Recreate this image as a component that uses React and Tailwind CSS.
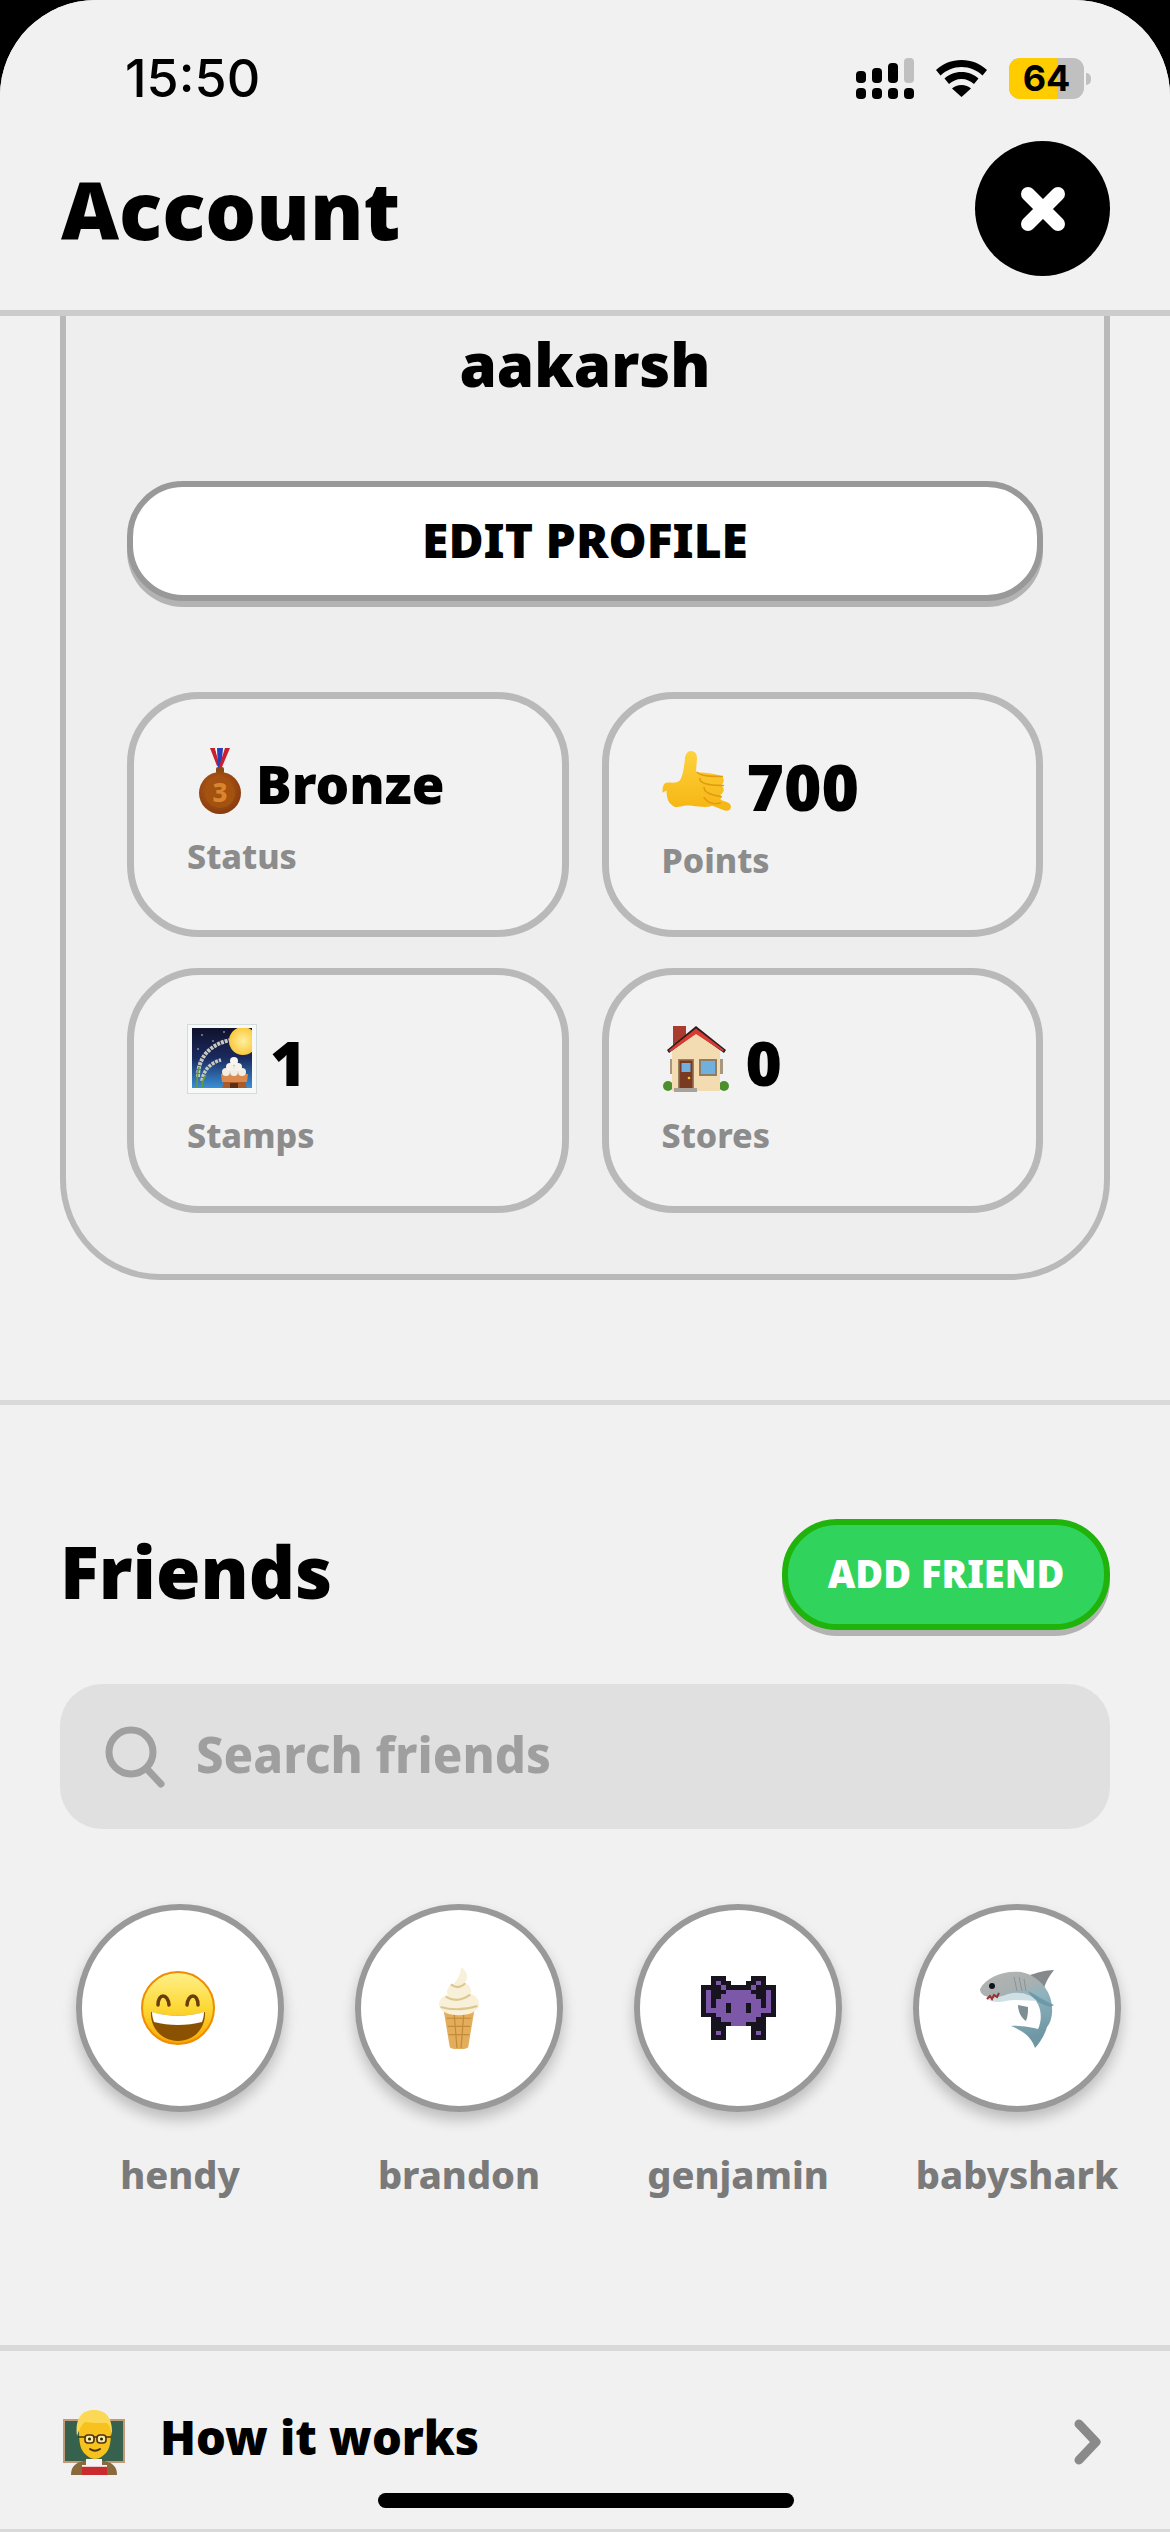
const F = { fontFamily: '"Noto Sans", "Open Sans", sans-serif' };

function Signal() {
  return (
    <svg width="58" height="41" viewBox="0 0 58 41" className="block">
      <rect x="0" y="13" width="10" height="12" rx="4" fill="#000" />
      <rect x="16" y="10" width="10" height="15" rx="4" fill="#000" />
      <rect x="32" y="5" width="10" height="20" rx="4" fill="#000" />
      <rect x="48" y="0" width="10" height="25" rx="4" fill="#c0c0c0" />
      {[0, 16, 32, 48].map((x) => (
        <rect key={x} x={x} y="30" width="10" height="11" rx="4" fill="#000" />
      ))}
    </svg>
  );
}

function Wifi() {
  return (
    <svg width="51" height="37" viewBox="0 0 51 37" className="block">
      <path d="M25.5 0C15.5 0 7 3.500 0 10l4.500 5.500C10.500 10 17.500 7 25.500 7s15 3 21 8.500L51 10C44 3.500 35.500 0 25.500 0Z" fill="#000" />
      <path d="M25.500 12c-7 0-12.500 2.500-17 6.500l4.500 5.500c3.500-3 7.500-5 12.500-5s9 2 12.500 5l4.500-5.500C38 14.500 32.500 12 25.500 12Z" fill="#000" />
      <path d="M25.500 25c-4 0-7 1.500-9.500 3.500L25.500 37 35 28.500C32.500 26.500 29.500 25 25.500 25Z" fill="#000" />
    </svg>
  );
}

function Battery() {
  return (
    <div className="flex items-center">
      <div className="relative w-[75px] h-[41px] rounded-[11px] bg-[#c0c0c0]">
        <div className="h-full w-[48px] rounded-l-[11px] bg-[#ffcc00]" />
        <div
          className="absolute inset-0 flex items-center justify-center text-[36px] leading-[41px] font-bold text-black"
          style={{ fontFamily: '"Inter", sans-serif' }}
        >
          64
        </div>
      </div>
      <div className="ml-[2px] w-[5px] h-[12px] rounded-r-full bg-[#c0c0c0]" />
    </div>
  );
}

function Medal({ className }) {
  return (
    <svg viewBox="0 0 42 66" className={className}>
      <defs>
        <radialGradient id="bz" cx="45%" cy="40%" r="65%">
          <stop offset="0" stopColor="#c0651c" />
          <stop offset="1" stopColor="#82370b" />
        </radialGradient>
      </defs>
      <path d="M11 0h5l5 18h-3Z" fill="#c8202c" />
      <path d="M16 0h3l3 16h-2Z" fill="#fff" />
      <path d="M18 0h6l-2 22h-3Z" fill="#2a3fb8" />
      <path d="M26 0h5l-8 19h-3Z" fill="#c8202c" />
      <rect x="17" y="19" width="8" height="7" rx="2" fill="#8a4a12" />
      <circle cx="21" cy="45" r="21" fill="url(#bz)" />
      <circle cx="21" cy="45" r="15" fill="#a4520f" />
      <text x="21" y="54" textAnchor="middle" fontSize="26" fontWeight="800" fill="#d9852f" style={F}>3</text>
    </svg>
  );
}

function CallMe({ className }) {
  return (
    <svg viewBox="13 10 68 67" className={className}>
      <defs>
        <linearGradient id="hd" x1="0" y1="0" x2="0" y2="1">
          <stop offset="0" stopColor="#fdd23e" />
          <stop offset="1" stopColor="#f6b512" />
        </linearGradient>
      </defs>
      <path
        d="M13 52C13 46 14 42 18 42c4 0 9 1 12-2 3-4 4-12 5-20 0-6 3-9 6-9 4 0 6 3 6 7l-1 14c8 0 16 1 23 3 4 1 5 4 4 7-1 2-2 2-2 3 2 1 3 4 2 6-1 2-2 3-3 3 1 2 1 3 0 5l8 3c3 2 3 5 1 7-2 1-4 1-6 0l-11-4c-5 2-12 1-20 0-5-1-9 0-13 1-3 1-5 0-7-2-4-3-5-8-5-14Z"
        fill="url(#hd)"
      />
      <path d="M47 32c4 4 14 4 25 4M50 38c-1 4 6 7 23 7M54 47c0 5 6 7 17 9M54 57c4 5 10 7 16 5" fill="none" stroke="#e39a10" strokeWidth="1.500" strokeLinecap="round" />
    </svg>
  );
}

function Stamp({ className }) {
  return (
    <svg viewBox="7 5 70 70" className={className}>
      <defs>
        <linearGradient id="sky" x1="0" y1="0" x2="0" y2="1">
          <stop offset="0" stopColor="#10122c" />
          <stop offset="0.5" stopColor="#1a2a5e" />
          <stop offset="1" stopColor="#3a8fd6" />
        </linearGradient>
        <radialGradient id="mn" cx="50%" cy="50%" r="50%">
          <stop offset="0" stopColor="#fff0a0" />
          <stop offset="1" stopColor="#fbc93c" />
        </radialGradient>
        <clipPath id="stc">
          <rect x="12" y="9" width="60" height="60" />
        </clipPath>
      </defs>
      <rect x="7.500" y="5.500" width="69" height="69" fill="#f7f9f9" stroke="#d3dcdc" strokeWidth="1" />
      <g clipPath="url(#stc)">
        <rect x="12" y="9" width="60" height="60" fill="url(#sky)" />
        <circle cx="63" cy="22" r="14" fill="url(#mn)" />
        <circle cx="22" cy="16" r="0.700" fill="#fff" />
        <circle cx="33" cy="22" r="0.700" fill="#fff" />
        <circle cx="44" cy="13" r="0.700" fill="#fff" />
        <circle cx="18" cy="30" r="0.700" fill="#fff" />
        <path d="M18 58C18 40 28 26 50 21" fill="none" stroke="#c8c8c0" strokeWidth="4" strokeDasharray="3 1" />
        <path d="M22 62C23 52 30 44 41 41" fill="none" stroke="#c8c8c0" strokeWidth="3.500" strokeDasharray="3 1" />
        <path d="M17 69C17 60 17 54 19 48M22 69C22 64 23 60 26 56" fill="none" stroke="#5f9a3f" strokeWidth="1.800" />
        <path d="M41 55h27l-1 8H42Z" fill="#d98a4c" />
        <path d="M44 63h21l2 6H42Z" fill="#a85a2a" />
        <rect x="50" y="64" width="8" height="5" fill="#5a2e14" />
        <circle cx="46" cy="53" r="4" fill="#f2ede2" />
        <circle cx="54" cy="53" r="4" fill="#f2ede2" />
        <circle cx="62" cy="53" r="4" fill="#f2ede2" />
        <circle cx="50" cy="48" r="4" fill="#f7f3ea" />
        <circle cx="58" cy="48" r="4" fill="#f7f3ea" />
        <circle cx="54" cy="42" r="4" fill="#faf7f0" />
      </g>
    </svg>
  );
}

function House({ className }) {
  return (
    <svg viewBox="8 6 66 68" className={className}>
      <rect x="18" y="7" width="13" height="20" fill="#a93b2f" />
      <circle cx="13" cy="67" r="5" fill="#4d8f2c" />
      <circle cx="69" cy="67" r="5" fill="#4d8f2c" />
      <rect x="15" y="40" width="3" height="15" fill="#a8977e" />
      <rect x="65" y="40" width="3" height="15" fill="#a8977e" />
      <path d="M17 30 41 12l24 18v42H17Z" fill="#f3dcb2" />
      <path d="M12 31 41 7l30 24-2 3L41 14 14 34Z" fill="#2a1d1d" />
      <path d="M14 31 41 9.500l28 21.500-1 1.500L41 15 15 33Z" fill="#d93b34" />
      <rect x="23" y="40" width="16" height="29" fill="#9a8062" />
      <rect x="24.500" y="41.500" width="13" height="27.500" fill="#7a3a22" />
      <rect x="26.500" y="44" width="9" height="9" fill="#6fb0df" />
      <circle cx="34" cy="59" r="1.300" fill="#f4c63a" />
      <rect x="44" y="40" width="18" height="17" fill="#947c5e" />
      <rect x="46" y="42" width="14" height="13" fill="#6fb0df" />
      <rect x="19" y="69" width="23" height="4" fill="#a8a29a" />
    </svg>
  );
}

function Grin({ className }) {
  return (
    <svg viewBox="0 0 74 74" className={className}>
      <defs>
        <linearGradient id="gf" x1="0" y1="0" x2="0" y2="1">
          <stop offset="0" stopColor="#fff08a" />
          <stop offset="0.5" stopColor="#fdd835" />
          <stop offset="1" stopColor="#f9a602" />
        </linearGradient>
      </defs>
      <circle cx="37" cy="37" r="36" fill="url(#gf)" stroke="#ef8c00" strokeWidth="2" />
      <path d="M17 34c0-12 10-12 11 0M46 34c1-12 11-12 11 0" fill="none" stroke="#6b3d0a" strokeWidth="3.500" strokeLinecap="round" />
      <path d="M10 41c16 5 38 5 54 0 1 16-11 29-27 29S9 57 10 41Z" fill="#8a5200" />
      <path d="M11 41c16 5 36 5 52 0 0 4-1 7-2 10-15 4-33 4-48 0-1-3-2-6-2-10Z" fill="#fff" />
    </svg>
  );
}

function IceCream({ className }) {
  return (
    <svg viewBox="5 0 40 80" className={className}>
      <path d="M10 42h30l-6 36c-1 3-17 3-18 0Z" fill="#e3ad5c" />
      <path d="M13 50h24M14 58h22M15 66h20M20 42l3 37M30 42l-3 37" stroke="#c48b3a" strokeWidth="1.200" fill="none" />
      <path d="M27 0c7 5 7 11 4 15 5 3 7 8 5 11 6 1 10 8 8 13-3 6-11 8-19 8S9 45 6 39c-2-5 2-11 8-12-2-5 1-9 6-11 4-4 7-10 7-16Z" fill="#f8f0d8" />
      <path d="M12 29c8 5 17 3 24-2M17 17c5 4 10 3 14-1M7 39c10 3 23 3 36-1" fill="none" stroke="#dcc88f" strokeWidth="2" />
    </svg>
  );
}

const INVADER = [
  '..kkk.....kkk..',
  '..kPkk...kkPk..',
  'kkkkPkkkkkPkkkk',
  'kPkkkPPPPPkkkPk',
  'kPkkPPPPPPPkkPk',
  'kPkPPPPPPPPPkPk',
  'kPkPPkPPPkPPkPk',
  'kPPPPkPPPkPPPPk',
  'kkkPPPPPPPPPkkk',
  '..kkPPPPPPPkk..',
  '..kkkkPPPkkkk..',
  '..kkk.....kkk..',
  '..kPk.....kPk..',
  '..kkk.....kkk..',
];

function Invader({ className }) {
  return (
    <svg viewBox="0 0 15 14" shapeRendering="crispEdges" className={className} preserveAspectRatio="none">
      {INVADER.flatMap((row, y) =>
        row.split('').map((c, x) =>
          c === '.' ? null : <rect key={`${x}-${y}`} x={x} y={y} width="1.020" height="1.020" fill={c === 'k' ? '#17131f' : '#7d57a8'} />
        )
      )}
    </svg>
  );
}

function Shark({ className }) {
  return (
    <svg viewBox="12 6 78 82" className={className}>
      <defs>
        <linearGradient id="sh" x1="0" y1="0" x2="0.300" y2="1">
          <stop offset="0" stopColor="#b4b6b4" />
          <stop offset="0.32" stopColor="#a9b0b0" />
          <stop offset="0.5" stopColor="#8fb3bf" />
          <stop offset="1" stopColor="#6f96a3" />
        </linearGradient>
      </defs>
      <path d="M64 14C70 12 80 9 88 9 84 14 80 20 78 27Z" fill="#85898b" />
      <path d="M52 44C52 50 55 57 60 60 62 55 62 50 62 46Z" fill="#7f8e93" />
      <path d="M14 28C20 16 38 9 55 11 68 13 80 24 84 36 88 48 86 60 81 66 79 73 74 82 69 87 66 78 60 71 45 65 55 64 66 67 72 68 76 60 76 48 70 40 60 32 48 33 36 36 26 38 14 36 14 28Z" fill="url(#sh)" />
      <path d="M20 37C28 38 36 35 42 33 54 30 64 33 72 40 64 40 50 38 40 40 32 42 24 41 20 37Z" fill="#cfe0e4" />
      <path d="M62 30C70 34 78 40 88 44L84 46C76 44 66 38 62 30Z" fill="#6c9aa9" />
      <path d="M48 16 51 30M53 16 56 30M58 18 60 30" fill="none" stroke="#8e9292" strokeWidth="1" />
      <circle cx="26" cy="25" r="3" fill="#10151a" />
      <path d="M21 38 24 35 26 38 28 34 31 36 33 32" fill="none" stroke="#9a3030" strokeWidth="2" />
    </svg>
  );
}

function Teacher({ className }) {
  return (
    <svg viewBox="8 4 62 66" className={className}>
      <rect x="8" y="14" width="62" height="44" fill="#c29a7a" />
      <rect x="10" y="16" width="58" height="40" fill="#35614d" />
      <path d="M16 70c0-7 3-11 9-13 9-3 19-3 28 0 6 2 9 6 9 13Z" fill="#8a6a3c" />
      <path d="M31 54h16v6H31Z" fill="#f4f4f4" />
      <rect x="27" y="60" width="25" height="10" fill="#c92b2f" />
      <rect x="27" y="60" width="25" height="1.800" fill="#f2f2f2" />
      <path d="M24 24c0-8 7-12 16-12s16 4 16 12c0 13-1 19-5 24-3 3-7 6-11 6s-8-3-11-6c-4-5-5-11-5-24Z" fill="#f7c21d" />
      <path d="M22 31C20 14 26 5 39 5s19 9 18 26c-1-5-2-10-5-13-8 0-15 0-22-1-4 3-6 8-8 14Z" fill="#fcd857" />
      <rect x="30" y="30" width="9" height="8" rx="3" fill="#fbe9a8" stroke="#4a3410" strokeWidth="1.600" />
      <rect x="42" y="30" width="9" height="8" rx="3" fill="#fbe9a8" stroke="#4a3410" strokeWidth="1.600" />
      <path d="M39 32h3M30 32h-7M51 32h5" stroke="#4a3410" strokeWidth="1.600" />
      <circle cx="34.500" cy="34" r="1.500" fill="#2f2208" />
      <circle cx="46.500" cy="34" r="1.500" fill="#2f2208" />
      <path d="M35 44c3 2 7 2 10 0" fill="none" stroke="#4a3410" strokeWidth="2" strokeLinecap="round" />
    </svg>
  );
}

function Stat({ icon, value, label, gap, top, labelTop, valueClass }) {
  return (
    <div
      className="h-[245px] rounded-[72px] border-[7px] border-[#b9b9b9] bg-[#f2f2f2] pl-[53px]"
      style={{ paddingTop: top }}
    >
      <div className="flex items-center h-[70px]" style={{ gap }}>
        {icon}
        <span className={`${valueClass} leading-none font-black text-black`}>{value}</span>
      </div>
      <div className="text-[34px] leading-[40px] font-extrabold text-[#8c8c8c]" style={{ marginTop: labelTop }}>
        {label}
      </div>
    </div>
  );
}

function Friend({ name, icon }) {
  return (
    <div className="w-[208px] flex flex-col items-center shrink-0">
      <div className="w-[208px] h-[208px] rounded-full border-[6px] border-[#999999] bg-white flex items-center justify-center shadow-[0_8px_14px_rgba(0,0,0,0.22)]">
        {icon}
      </div>
      <div className="mt-[38px] text-[38px] leading-[48px] font-extrabold text-[#7a7a7a] whitespace-nowrap">{name}</div>
    </div>
  );
}

export default function App() {
  return (
    <div className="w-[1170px] h-[2532px] bg-black overflow-hidden relative" style={F}>
      <div className="h-full bg-[#f1f1f1] rounded-t-[96px] overflow-hidden flex flex-col">
        <header className="h-[316px] shrink-0 border-b-[6px] border-[#cccccc] relative z-10 bg-[#f1f1f1]">
          <div className="flex items-center justify-between h-[141px] pl-[125px] pr-[79px] pt-[66px] pb-[50px]">
            <span className="text-[52px] leading-none font-medium text-black" style={{ fontFamily: '"Inter", sans-serif' }}>
              15:50
            </span>
            <div className="flex items-center gap-[22px]">
              <Signal />
              <Wifi />
              <Battery />
            </div>
          </div>
          <div className="flex items-center justify-between pl-[61px] pr-[60px]">
            <h1 className="text-[80px] leading-[135px] font-black text-black">Account</h1>
            <button className="w-[135px] h-[135px] rounded-full bg-black flex items-center justify-center">
              <svg width="44" height="44" viewBox="0 0 44 44">
                <path d="M7 7 37 37M37 7 7 37" stroke="#fff" strokeWidth="14" strokeLinecap="round" />
              </svg>
            </button>
          </div>
        </header>

        <section className="mx-[60px] border-x-[6px] border-b-[6px] border-[#b9b9b9] bg-[#eeeeee] rounded-b-[100px] px-[61px] pb-[61px] h-[964px] shrink-0">
          <div className="h-[165px] pt-[13px] text-center text-[60px] leading-[70px] font-black text-black">aakarsh</div>
          <button className="w-full h-[120px] rounded-[56px] border-[6px] border-[#999999] bg-white shadow-[0_6px_0_#b3b3b3] pb-[3px] text-[48px] leading-none font-black text-black">
            EDIT PROFILE
          </button>
          <div className="grid grid-cols-2 gap-x-[33px] gap-y-[31px] mt-[91px]">
            <Stat top={47} gap={15} labelTop={20} icon={<Medal className="w-[42px] h-[66px] ml-[12px]" />} value="Bronze" valueClass="text-[53px] mt-[4px]" label="Status" />
            <Stat top={50} gap={15} labelTop={21} icon={<CallMe className="w-[70px] h-[68px]" />} value="700" valueClass="text-[64px] mt-[6px]" label="Points" />
            <Stat top={49} gap={13} labelTop={21} icon={<Stamp className="w-[70px] h-[70px]" />} value="1" valueClass="text-[62px] mt-[6px]" label="Stamps" />
            <Stat top={49} gap={16} labelTop={21} icon={<House className="w-[68px] h-[68px]" />} value="0" valueClass="text-[62px] mt-[6px]" label="Stores" />
          </div>
        </section>

        <div className="h-[5px] bg-[#d9d9d9] mt-[120px] shrink-0" />

        <section className="px-[60px] shrink-0">
          <div className="flex items-center justify-between mt-[114px]">
            <h2 className="text-[72px] leading-[105px] font-black text-black pb-[6px]">Friends</h2>
            <button className="w-[328px] h-[111px] rounded-[55px] border-[6px] border-[#1fb30c] bg-[#30d45c] shadow-[0_6px_0_#b3b3b3] pb-[3px] text-[38px] leading-none font-black text-white">
              ADD FRIEND
            </button>
          </div>
          <div className="mt-[54px] h-[145px] rounded-[42px] bg-[#e0e0e0] flex items-center pl-[45px] gap-[31px]">
            <svg width="60" height="62" viewBox="0 0 60 62" className="shrink-0">
              <circle cx="26" cy="26" r="22" fill="none" stroke="#a0a0a0" strokeWidth="7" />
              <path d="M42 43 56 58" stroke="#a0a0a0" strokeWidth="7" strokeLinecap="round" />
            </svg>
            <span className="text-[49px] leading-none pb-[5px] font-extrabold text-[#9f9f9f]">Search friends</span>
          </div>
        </section>

        <div className="flex gap-[71px] pl-[76px] mt-[75px] shrink-0">
          <Friend name="hendy" icon={<Grin className="w-[74px] h-[74px] mr-[4px]" />} />
          <Friend name="brandon" icon={<IceCream className="w-[50px] h-[82px]" />} />
          <Friend name="genjamin" icon={<Invader className="w-[75px] h-[64px]" />} />
          <Friend name="babyshark" icon={<Shark className="w-[78px] h-[82px]" />} />
        </div>

        <div className="h-[6px] bg-[#d9d9d9] mt-[147px] shrink-0" />

        <div className="flex items-center pl-[62px] pr-[68px] mt-[58px] shrink-0">
          <Teacher className="w-[64px] h-[66px]" />
          <span className="ml-[34px] text-[47px] leading-[56px] pb-[10px] font-black text-black">How it works</span>
          <svg width="28" height="46" viewBox="0 0 28 46" className="ml-auto">
            <path d="M5 5 22 23 5 41" fill="none" stroke="#8a8a8a" strokeWidth="9" strokeLinecap="round" strokeLinejoin="round" />
          </svg>
        </div>
      </div>

      <div className="absolute left-[378px] top-[2493px] w-[416px] h-[15px] rounded-full bg-black" />
      <div className="absolute left-0 right-0 bottom-0 h-[3px] bg-[#d9d9d9]" />
    </div>
  );
}
